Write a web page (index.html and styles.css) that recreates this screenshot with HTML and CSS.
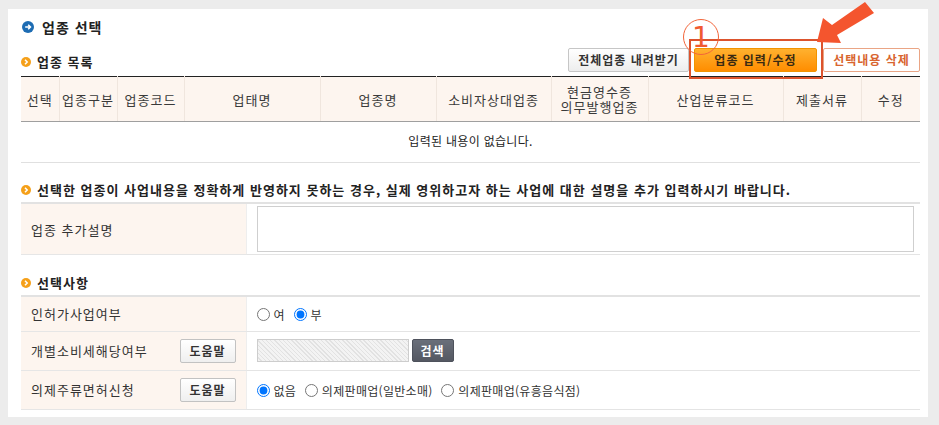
FILE: index.html
```html
<!DOCTYPE html>
<html lang="ko">
<head>
<meta charset="utf-8">
<title>업종 선택</title>
<link rel="stylesheet" href="styles.css">
</head>
<body>
<div class="panel">
  <h2 class="title">
    <svg class="ico-blue" viewBox="0 0 12 12"><circle cx="6" cy="6" r="6" fill="#1d6cb3"/><path d="M3.2 6h5M6.2 3.8L8.4 6 6.2 8.2" stroke="#fff" stroke-width="1.6" fill="none"/></svg>
    업종 선택
  </h2>
  <div class="list-head">
    <h3 class="sub"><svg class="ico-orange" viewBox="0 0 10 10"><circle cx="5" cy="5" r="5" fill="#f5a01a"/><path d="M4 2.8L6.2 5 4 7.2" stroke="#fff" stroke-width="1.5" fill="none"/></svg>업종 목록</h3>
    <div class="btns">
      <button class="btn btn-gray">전체업종 내려받기</button>
      <button class="btn btn-orange">업종 입력/수정</button>
      <button class="btn btn-line">선택내용 삭제</button>
    </div>
  </div>
  <table class="list">
    <colgroup>
      <col style="width:38px"><col style="width:58px"><col style="width:67px"><col style="width:136px"><col style="width:116px"><col style="width:115px"><col style="width:97px"><col style="width:135px"><col style="width:78px"><col>
    </colgroup>
    <thead>
      <tr>
        <th>선택</th><th>업종구분</th><th>업종코드</th><th>업태명</th><th>업종명</th><th>소비자상대업종</th><th class="two"><span class="ln">현금영수증</span><span class="ln">의무발행업종</span></th><th>산업분류코드</th><th>제출서류</th><th>수정</th>
      </tr>
    </thead>
    <tbody>
      <tr><td colspan="10" class="empty">입력된 내용이 없습니다.</td></tr>
    </tbody>
  </table>

  <h3 class="sub desc"><svg class="ico-orange" viewBox="0 0 10 10"><circle cx="5" cy="5" r="5" fill="#f5a01a"/><path d="M4 2.8L6.2 5 4 7.2" stroke="#fff" stroke-width="1.5" fill="none"/></svg>선택한 업종이 사업내용을 정확하게 반영하지 못하는 경우, 실제 영위하고자 하는 사업에 대한 설명을 추가 입력하시기 바랍니다.</h3>
  <table class="form">
    <tr class="r-text">
      <th class="label">업종 추가설명</th>
      <td><textarea class="memo"></textarea></td>
    </tr>
  </table>

  <h3 class="sub opt"><svg class="ico-orange" viewBox="0 0 10 10"><circle cx="5" cy="5" r="5" fill="#f5a01a"/><path d="M4 2.8L6.2 5 4 7.2" stroke="#fff" stroke-width="1.5" fill="none"/></svg>선택사항</h3>
  <table class="form">
    <tr class="r1">
      <th class="label">인허가사업여부</th>
      <td>
        <label class="opt-item"><input type="radio" name="a">여</label>
        <label class="opt-item"><input type="radio" name="a" checked>부</label>
      </td>
    </tr>
    <tr class="r2">
      <th class="label"><div class="label-flex"><span>개별소비세해당여부</span><button class="btn-help">도움말</button></div></th>
      <td>
        <div class="search"><span class="hatch"></span><button class="btn-search">검색</button></div>
      </td>
    </tr>
    <tr class="r2">
      <th class="label"><div class="label-flex"><span>의제주류면허신청</span><button class="btn-help">도움말</button></div></th>
      <td>
        <label class="opt-item"><input type="radio" name="b" checked>없음</label>
        <label class="opt-item wide"><input type="radio" name="b">의제판매업(일반소매)</label>
        <label class="opt-item"><input type="radio" name="b">의제판매업(유흥음식점)</label>
      </td>
    </tr>
  </table>
</div>

<div class="highlight"></div>
<div class="num">1</div>
<svg class="arrow" viewBox="0 0 939 425" width="939" height="425">
  <polygon points="817,42 823,18 832,25 865,2 874,13 837,35 841,43" fill="#f4552e"/>
</svg>
</body>
</html>
```

FILE: styles.css
```css
* { box-sizing: border-box; }
html, body { margin: 0; padding: 0; }
body {
  background: #ececec;
  font-family: "Noto Sans CJK KR", "Noto Sans", sans-serif;
  color: #333;
  width: 939px;
  height: 425px;
  overflow: hidden;
  position: relative;
  letter-spacing: 1px;
}
.panel {
  margin: 9px 0 0 8px;
  width: 920px;
  height: 408px;
  background: #fff;
  padding: 0 8px 0 13px;
}
.title {
  margin: 0;
  height: 39px;
  padding-bottom: 3px;
  display: flex;
  align-items: center;
  font-size: 14px;
  font-weight: bold;
  color: #222;
  line-height: 20px;
}
.ico-blue { width: 12px; height: 12px; margin: 0 8px 0 1px; flex: none; }
.ico-orange { width: 10px; height: 10px; margin-right: 6px; flex: none; }

.list-head {
  display: flex;
  justify-content: space-between;
  align-items: flex-end;
  height: 24px;
  margin-bottom: 4px;
}
.sub {
  margin: 0;
  display: flex;
  align-items: center;
  font-size: 13px;
  font-weight: bold;
  color: #222;
  line-height: 18px;
}
.list-head .sub { padding-bottom: 1px; }
.btns { display: flex; }
.btn {
  height: 24px;
  font-family: inherit;
  font-size: 12px;
  font-weight: bold;
  letter-spacing: 1px;
  padding: 0;
  border-radius: 2px;
  line-height: 22px;
  text-align: center;
}
.btn-gray {
  width: 121px;
  border: 1px solid #c6c6c6;
  background: linear-gradient(#ffffff, #ededed);
  color: #333;
}
.btn-orange {
  width: 123px;
  margin-left: 5px;
  border: 1px solid #f29400;
  background: linear-gradient(#ffb12f, #ff8d00);
  color: #3a2a12;
}
.btn-line {
  width: 97px;
  margin-left: 6px;
  border: 1px solid #eaa585;
  background: #fff;
  color: #d8652f;
}

.list {
  width: 100%;
  border-collapse: collapse;
  table-layout: fixed;
  border-top: 1px solid #222;
}
.list th {
  height: 45px;
  padding: 0;
  background: #fdf5ef;
  font-size: 13px;
  font-weight: normal;
  color: #3a3a3a;
  border-left: 1px solid #f0e6de;
  border-bottom: 1px solid #9f9f9f;
  line-height: 15px;
  white-space: nowrap;
}
.list th .ln { display: block; height: 15px; line-height: 15px; }
.list th:first-child { border-left: none; }
.list .empty {
  height: 41px;
  text-align: center;
  font-size: 12px;
  letter-spacing: 0.3px;
  color: #222;
  border-bottom: 1px solid #e0e0e0;
  padding: 0 0 3px;
}

.desc { padding: 18px 0 3px; }
.opt { padding: 19px 0 3px; }

.form {
  width: 100%;
  border-collapse: collapse;
  border-top: 2px solid #e2e2e2;
}
.form th.label {
  width: 225px;
  background: #fdf5ef;
  text-align: left;
  font-weight: normal;
  font-size: 13px;
  color: #333;
  padding: 0 10px;
  border-right: 1px solid #eee;
  border-bottom: 1px solid #e6e6e6;
}
.form td {
  padding: 0 6px 0 10px;
  border-bottom: 1px solid #e4e4e4;
  font-size: 12px;
  letter-spacing: 0.3px;
  color: #333;
}
.r-text td { padding-top: 2px; padding-bottom: 2px; }
.memo {
  display: block;
  width: 100%;
  height: 46px;
  border: 1px solid #cfcfcf;
  resize: none;
  margin: 0;
}
.r1 th, .r1 td { height: 35px; }
.r2 th, .r2 td { height: 39px; }
.label-flex {
  display: flex;
  justify-content: space-between;
  align-items: center;
}
.btn-help {
  width: 56px;
  height: 24px;
  padding: 0;
  border: 1px solid #c2c2c2;
  border-radius: 2px;
  background: linear-gradient(#ffffff, #efefef);
  font-family: inherit;
  font-size: 12px;
  font-weight: bold;
  letter-spacing: 1px;
  color: #333;
  line-height: 22px;
}
.opt-item {
  display: inline-flex;
  align-items: center;
  margin-right: 5px;
  vertical-align: middle;
}
.opt-item.wide { margin-right: 5px; }
.opt-item input {
  width: 13px;
  height: 13px;
  margin: 0 4px 0 0;
}
.search { display: flex; align-items: center; }
.hatch {
  width: 152px;
  height: 23px;
  border: 1px solid #cdcdcd;
  background: repeating-linear-gradient(45deg, #f3f3f3 0 2px, #e2e2e2 2px 3px);
}
.btn-search {
  width: 42px;
  height: 23px;
  margin-left: 3px;
  padding: 0;
  border: 1px solid #4e525c;
  border-radius: 2px;
  background: linear-gradient(#6a6f7a, #545862);
  color: #fff;
  font-family: inherit;
  font-size: 12px;
  font-weight: bold;
  letter-spacing: 1px;
  line-height: 21px;
}

.highlight {
  position: absolute;
  left: 689px;
  top: 39px;
  width: 134px;
  height: 40px;
  border: 2px solid #dc532d;
}
.num {
  position: absolute;
  left: 683px;
  top: 19px;
  width: 36px;
  height: 36px;
  border-radius: 50%;
  border: 1.5px solid #f2663b;
  color: #f05a30;
  font-family: "DejaVu Sans", sans-serif;
  font-size: 28px;
  letter-spacing: 0;
  display: flex;
  align-items: center;
  justify-content: center;
  line-height: 1;
  padding-top: 1px;
}
.arrow {
  position: absolute;
  left: 0;
  top: 0;
  pointer-events: none;
}
```
